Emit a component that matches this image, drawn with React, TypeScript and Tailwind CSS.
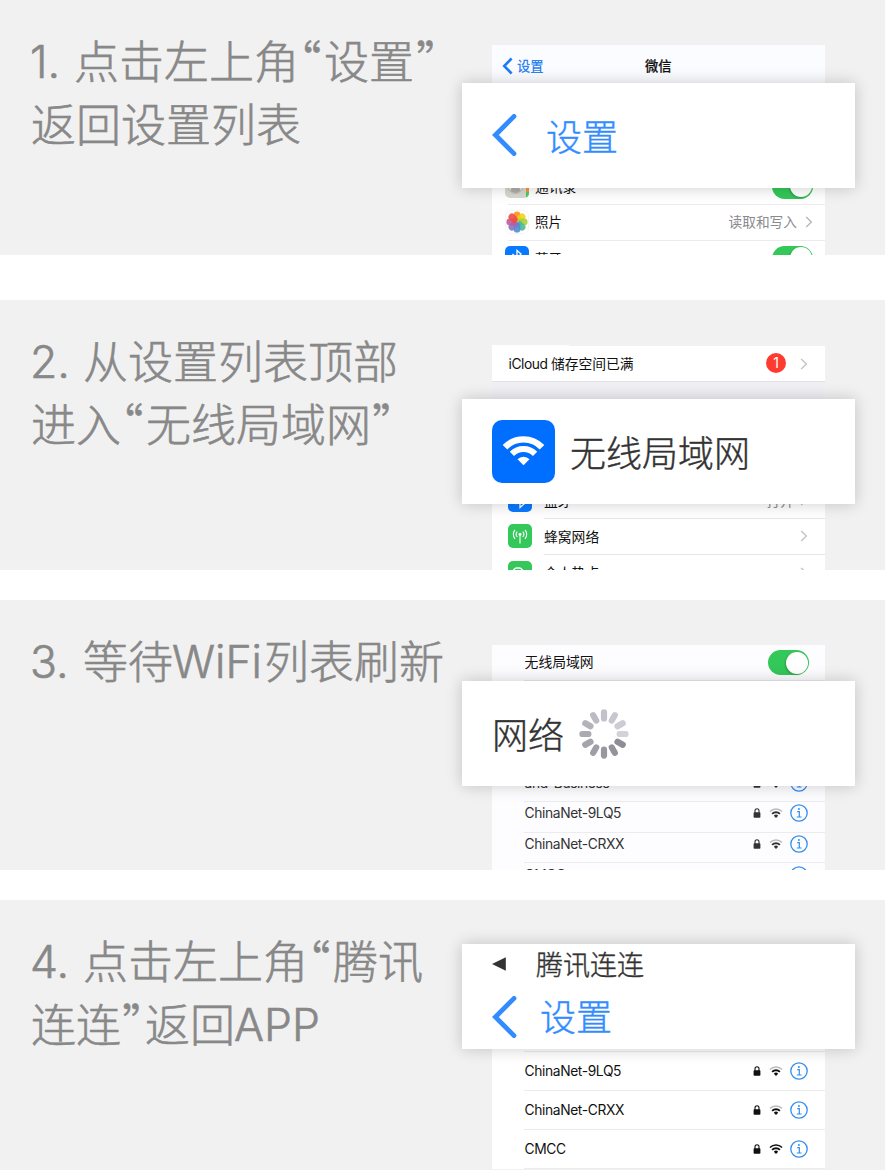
import React from 'react';

const CJK = "font-['Noto_Sans_CJK_SC',sans-serif]";

function Seg({ w, children }: { w: string; children: React.ReactNode }) {
  return <span className={`block shrink-0 whitespace-pre ${w}`}>{children}</span>;
}

function Latin({ w, children }: { w: string; children: React.ReactNode }) {
  return <span className={`relative -top-px -ml-px mr-px block shrink-0 whitespace-pre font-['Inter'] text-[44.5px] ${w}`}>{children}</span>;
}

function Open() {
  return <span className="-ml-px mr-px block w-[24px] shrink-0 [font-feature-settings:'halt']">“</span>;
}

function Close() {
  return <span className="block w-[24px] shrink-0 pl-px [font-feature-settings:'halt']">”</span>;
}

function Line({ children }: { children: React.ReactNode }) {
  return <div className="flex h-[63px] items-baseline">{children}</div>;
}

function Step({ height, title, children }: { height: string; title: React.ReactNode; children: React.ReactNode }) {
  return (
    <section className={`relative flex overflow-hidden bg-[#f1f1f1] ${height}`}>
      <h2 lang="zh-CN" className={`w-[492px] shrink-0 pl-[31px] pt-[28px] text-[45px] font-light leading-[63px] text-[#888] [-webkit-text-stroke:0.6px_#888] ${CJK}`}>{title}</h2>
      {children}
    </section>
  );
}

function Panel({ className, children }: { className: string; children: React.ReactNode }) {
  return (
    <div className={`w-[333px] shrink-0 text-[13.8px] leading-5 text-[#111] font-['Inter','Noto_Sans_CJK_SC',sans-serif] ${className}`}>
      {children}
    </div>
  );
}

function Card({ className, children }: { className: string; children: React.ReactNode }) {
  return (
    <div className={`absolute left-[462px] h-[105px] w-[393px] bg-white pl-[30px] shadow-[0_0_15px_rgba(0,0,0,0.2)] ${CJK} ${className}`}>
      {children}
    </div>
  );
}

function CardText({ className, children }: { className: string; children: React.ReactNode }) {
  return <span className={`font-light [-webkit-text-stroke:0.4px_currentColor] ${className}`}>{children}</span>;
}

function BigChevron() {
  return (
    <svg width="26" height="42" viewBox="0 0 26 42" className="shrink-0">
      <path d="M22 2.4 L3.4 21 L22 39.6" fill="none" stroke="#338cff" strokeWidth="4.8" strokeLinecap="round" />
    </svg>
  );
}

function Chevron({ color = '#c4c4c7' }: { color?: string }) {
  return (
    <svg width="8" height="14" viewBox="0 0 8 14" className="shrink-0">
      <path d="M1.2 2 L6.4 7 L1.2 12" fill="none" stroke={color} strokeWidth="1.4" />
    </svg>
  );
}

function Toggle() {
  return (
    <span className="flex h-[25px] w-[41px] shrink-0 justify-end rounded-full bg-[#34c759] p-[1.5px]">
      <span className="h-[22px] w-[22px] rounded-full bg-white shadow-[-1px_1px_2px_rgba(0,0,0,0.2)]" />
    </span>
  );
}

function Lock() {
  return (
    <svg width="8" height="10" viewBox="0 0 8 10" className="shrink-0">
      <rect x="0.6" y="4.2" width="6.8" height="5.6" rx="0.8" fill="currentColor" />
      <path d="M2 5 V2.8 a2 2.1 0 0 1 4 0 V5" fill="none" stroke="currentColor" strokeWidth="1.1" />
    </svg>
  );
}

function Wifi({ full = false }: { full?: boolean }) {
  return (
    <svg width="14" height="10" viewBox="0 0 14 10" className="shrink-0" fill="none">
      <path d="M1 3.5 A8.3 8.3 0 0 1 13 3.5" stroke={full ? 'currentColor' : '#b9b9bb'} strokeWidth="1.6" />
      <path d="M3.1 5.9 A5.4 5.4 0 0 1 10.9 5.9" stroke="currentColor" strokeWidth="1.8" />
      <path d="M7 10 L4.8 7.8 A3 3 0 0 1 9.2 7.8 Z" fill="currentColor" />
    </svg>
  );
}

function Info() {
  return (
    <svg width="18" height="18" viewBox="0 0 18 18" className="shrink-0" fill="none" stroke="#338eef">
      <circle cx="9" cy="9" r="8.2" strokeWidth="1.3" />
      <circle cx="8.9" cy="5" r="1" fill="#338eef" stroke="none" />
      <path d="M7.2 7.7 H9.3 V13 M6.8 13 H11.6" strokeWidth="1.2" />
    </svg>
  );
}

function Network({ name, height, full = false, last = false, tone = 'text-[#111]' }: { name: string; height: string; full?: boolean; last?: boolean; tone?: string }) {
  return (
    <div className={`ml-8 flex items-center pr-[17px] ${last ? '' : 'border-b border-[#ececef]'} ${height} ${tone}`}>
      <span className="flex-1 pl-[0.6px] tracking-[-0.38px]">{name}</span>
      <Lock />
      <span className="ml-2 flex"><Wifi full={full} /></span>
      <span className="ml-[7px] flex"><Info /></span>
    </div>
  );
}

function BlueGlyph() {
  return (
    <svg width="24" height="24" viewBox="0 0 24 24" className="shrink-0">
      <rect width="24" height="24" rx="5" fill="#087aff" />
      <path d="M7.5 8 L16 16 L12 19.5 V4.5 L16 8 L7.5 16" fill="none" stroke="#fff" strokeWidth="1.3" />
    </svg>
  );
}

function ContactsIcon() {
  return (
    <svg width="24" height="24" viewBox="0 0 24 24" className="shrink-0">
      <rect width="24" height="24" rx="5" fill="#d8d8d0" />
      <path d="M21 12 H24 V19 Q24 22 21 23.5 Z" fill="#49cf5b" />
      <path d="M21 4 H24 V18 H21 Z" fill="#f79336" />
      <circle cx="10.5" cy="12" r="7.5" fill="#e9e9e4" stroke="#bcbcb5" />
      <ellipse cx="10.5" cy="16" rx="5" ry="3" fill="#aeaea7" />
      <circle cx="10.5" cy="9" r="3" fill="#aeaea7" />
    </svg>
  );
}

const petals = ['#f7941d', '#f2d21b', '#a9cf38', '#4fb99a', '#4d8fd6', '#8773c0', '#c05a9c', '#ee4b42'];

function PhotosIcon() {
  return (
    <svg width="24" height="24" viewBox="0 0 24 24" className="shrink-0">
      <rect x="0.5" y="0.5" width="23" height="23" rx="5" fill="#fff" stroke="#f5f5f5" />
      {petals.map((c, i) => (
        <rect key={c} x="8.6" y="1.4" width="6.8" height="10.2" rx="3.4" fill={c} fillOpacity="0.9" transform={`rotate(${i * 45} 12 12)`} />
      ))}
    </svg>
  );
}

function CellularIcon() {
  return (
    <svg width="24" height="24" viewBox="0 0 24 24" className="shrink-0" fill="none" stroke="#fff" strokeWidth="1.1">
      <rect width="24" height="24" rx="5" fill="#34c759" stroke="none" />
      <circle cx="12" cy="10.3" r="1.5" fill="#fff" stroke="none" />
      <path d="M12 11 V19.5" />
      <path d="M9.3 7.6 A4 4 0 0 0 9.3 13 M14.7 7.6 A4 4 0 0 1 14.7 13" />
      <path d="M7 5.8 A6.8 6.8 0 0 0 7 14.8 M17 5.8 A6.8 6.8 0 0 1 17 14.8" />
    </svg>
  );
}

function HotspotIcon() {
  return (
    <svg width="24" height="24" viewBox="0 0 24 24" className="shrink-0" fill="none" stroke="#fff" strokeWidth="1.6">
      <rect width="24" height="24" rx="5" fill="#34c759" stroke="none" />
      <rect x="5.5" y="7" width="9" height="8" rx="3.5" />
      <rect x="9.5" y="10" width="9" height="8" rx="3.5" />
    </svg>
  );
}

function WifiTile() {
  return (
    <svg width="63" height="63" viewBox="0 0 63 63" className="shrink-0" fill="none" stroke="#fff">
      <rect width="63" height="63" rx="10" fill="#006fff" stroke="none" />
      <path d="M13 27.2 A25.7 25.7 0 0 1 50 27.2" strokeWidth="6.4" />
      <path d="M19.9 33.8 A16.2 16.2 0 0 1 43.1 33.8" strokeWidth="6" />
      <path d="M31.5 45.2 L25.5 39.3 A8.4 8.4 0 0 1 37.5 39.3 Z" fill="#fff" stroke="none" />
    </svg>
  );
}

const spokes = ['#c3c2ca', '#c8c7cf', '#cdccd4', '#d3d2da', '#8e8d96', '#94939b', '#9998a0', '#9f9ea6', '#a5a4ac', '#abaab2', '#b4b3bb', '#bcbbc3'];

function Spinner() {
  return (
    <svg width="50" height="50" viewBox="0 0 50 50" className="shrink-0">
      {spokes.map((c, i) => (
        <rect key={c} x="21.9" y="0.3" width="6.2" height="12.2" rx="3.1" fill={c} transform={`rotate(${i * 30} 25 25)`} />
      ))}
    </svg>
  );
}

export default function App() {
  return (
    <main className="flex h-[1170px] w-[885px] flex-col overflow-hidden bg-white">
      <Step
        height="h-[255px]"
        title={
          <>
            <Line><Latin w="w-[43px]">1.</Latin><Seg w="w-[226px]">点击左上角</Seg><Open /><Seg w="w-[91px]">设置</Seg><Close /></Line>
            <Line><Seg w="w-[270px]">返回设置列表</Seg></Line>
          </>
        }
      >
        <Panel className="mt-[45px] bg-white">
          <div className="flex h-[123px] items-start bg-[#fbfcff] pt-[10px]">
            <div className="flex w-[140px] items-center pl-[10px] text-[13.3px] font-medium text-[#2b82f0]">
              <svg width="11" height="18" viewBox="0 0 11 18"><path d="M9.6 1.5 L2.2 9 L9.6 16.5" fill="none" stroke="#1f7cf5" strokeWidth="2.6" /></svg>
              <span className="ml-[4px] pt-px">设置</span>
            </div>
            <span className="ml-[13px] pt-px text-[13.3px] font-medium [-webkit-text-stroke:0.2px_currentColor]">微信</span>
          </div>
          <div className="flex h-[36px] items-center pl-[13px] pr-[12px]">
            <ContactsIcon /><span className="ml-[6px] flex-1 pt-[2px]">通讯录</span><Toggle />
          </div>
          <div className="ml-4 h-[37px] border-y border-[#ececef]">
            <div className="-ml-[3px] flex h-[34px] items-center pr-[12px]">
              <PhotosIcon /><span className="ml-[6px] flex-1 text-[13.4px]">照片</span>
              <span className="text-[13.7px] text-[#8a8a8e]">读取和写入</span><span className="ml-[8px] flex"><Chevron color="#b8b8bb" /></span>
            </div>
          </div>
          <div className="flex h-[34px] items-center pl-[13px] pr-[12px]">
            <BlueGlyph /><span className="ml-[6px] flex-1 pt-px text-[13.4px]">蓝牙</span><Toggle />
          </div>
        </Panel>
        <Card className="top-[82.5px] flex items-center">
          <BigChevron />
          <CardText className="ml-[28px] text-[36px] leading-[54px] text-[#338cff]">设置</CardText>
        </Card>
      </Step>
      <div className="h-[45px] shrink-0" />
      <Step
        height="h-[270px]"
        title={
          <>
            <Line><Latin w="w-[52px]">2.</Latin><Seg w="w-[315px]">从设置列表顶部</Seg></Line>
            <Line><Seg w="w-[91px]">进入</Seg><Open /><Seg w="w-[225px]">无线局域网</Seg><Close /></Line>
          </>
        }
      >
        <Panel className="mt-[45px]">
          <div className="h-px w-[77px] bg-white" />
          <div className="flex h-[36px] items-center border-b border-[#e2e2e6] bg-white pl-[16.5px] pr-[17px]">
            <span className="flex-1 pt-px"><span className="tracking-[-0.45px]">iCloud </span>储存空间已满</span>
            <span className="mb-px mr-[14px] flex h-[20px] w-[20px] items-center justify-center rounded-full bg-[#ff3b30] text-[14px] text-white">1</span>
            <Chevron />
          </div>
          <div className="h-[100px] bg-[#efeff4]" />
          <div className="flex h-[36px] items-center bg-white pl-4 pr-[17px]">
            <BlueGlyph />
            <span className="ml-[12px] flex-1 pt-[2px]">蓝牙</span>
            <span className="mr-[6px] pt-[2px] text-[#8a8a8e]">打开</span><Chevron />
          </div>
          <div className="flex h-[37px] items-center bg-white pb-px pl-4">
            <CellularIcon />
            <div className="-mb-px ml-[12px] flex h-[37px] flex-1 items-center border-y border-[#e6e6e9] pr-[17px]"><span className="flex-1">蜂窝网络</span><span className="flex pb-px"><Chevron /></span></div>
          </div>
          <div className="flex h-[36px] items-center bg-white pl-4 pr-[17px]">
            <HotspotIcon /><span className="ml-[12px] flex-1">个人热点</span><Chevron />
          </div>
        </Panel>
        <Card className="top-[99px] flex items-center">
          <WifiTile />
          <CardText className="ml-[15px] pb-[2px] text-[36px] leading-[54px] text-[#333]">无线局域网</CardText>
        </Card>
      </Step>
      <div className="h-[30px] shrink-0" />
      <Step
        height="h-[270px]"
        title={<Line><Latin w="w-[52px]">3.</Latin><Seg w="w-[90px]">等待</Seg><Latin w="w-[91px]">WiFi</Latin><Seg w="w-[180px]">列表刷新</Seg></Line>}
      >
        <Panel className="mt-[45px] bg-[#fdfdff]">
          <div className="ml-8 flex h-[36px] items-center border-b border-[#ececef] pr-4">
            <span className="flex-1 pb-[2px] pl-[0.6px]">无线局域网</span><Toggle />
          </div>
          <div className="h-[91px]" />
          <Network name="and-Business" height="h-[30px] pb-[8px]" tone="text-[#333]" />
          <Network name="ChinaNet-9LQ5" height="h-[31px] pb-[8px]" tone="text-[#333]" />
          <Network name="ChinaNet-CRXX" height="h-[30px] pb-[7px]" tone="text-[#333]" />
          <Network name="CMCC" height="h-[30px] pb-[7px]" tone="text-[#333]" full last />
        </Panel>
        <Card className="top-[81px] flex items-center">
          <CardText className="pb-[2px] text-[36px] leading-[54px] text-[#333]">网络</CardText>
          <span className="ml-[15px] flex"><Spinner /></span>
        </Card>
      </Step>
      <div className="h-[30px] shrink-0" />
      <Step
        height="h-[270px]"
        title={
          <>
            <Line><Latin w="w-[52px]">4.</Latin><Seg w="w-[226px]">点击左上角</Seg><Open /><Seg w="w-[90px]">腾讯</Seg></Line>
            <Line><Seg w="w-[90px]">连连</Seg><Close /><Seg w="w-[90px]">返回</Seg><Latin w="w-[90px]">APP</Latin></Line>
          </>
        }
      >
        <Panel className="mb-[1px] mt-[45px] bg-white">
          <div className="ml-8 h-[107px] border-b border-[#ececef]" />
          <Network name="ChinaNet-9LQ5" height="h-[39px]" />
          <Network name="ChinaNet-CRXX" height="h-[39px]" />
          <Network name="CMCC" height="h-[39px]" full />
        </Panel>
        <Card className="top-[43.5px] flex flex-col">
          <div className="flex h-[42px] items-center">
            <svg width="14" height="14" viewBox="0 0 14 14" className="-mt-[2px]"><path d="M0 7 L13.8 0.2 V13.8 Z" fill="#333" /></svg>
            <CardText className="ml-[30px] pb-[2px] text-[27px] leading-[40px] text-[#333]">腾讯连连</CardText>
          </div>
          <div className="flex h-[63px] items-center">
            <BigChevron />
            <CardText className="ml-[22px] pb-[4px] text-[36px] leading-[54px] text-[#338cff]">设置</CardText>
          </div>
        </Card>
      </Step>
    </main>
  );
}
